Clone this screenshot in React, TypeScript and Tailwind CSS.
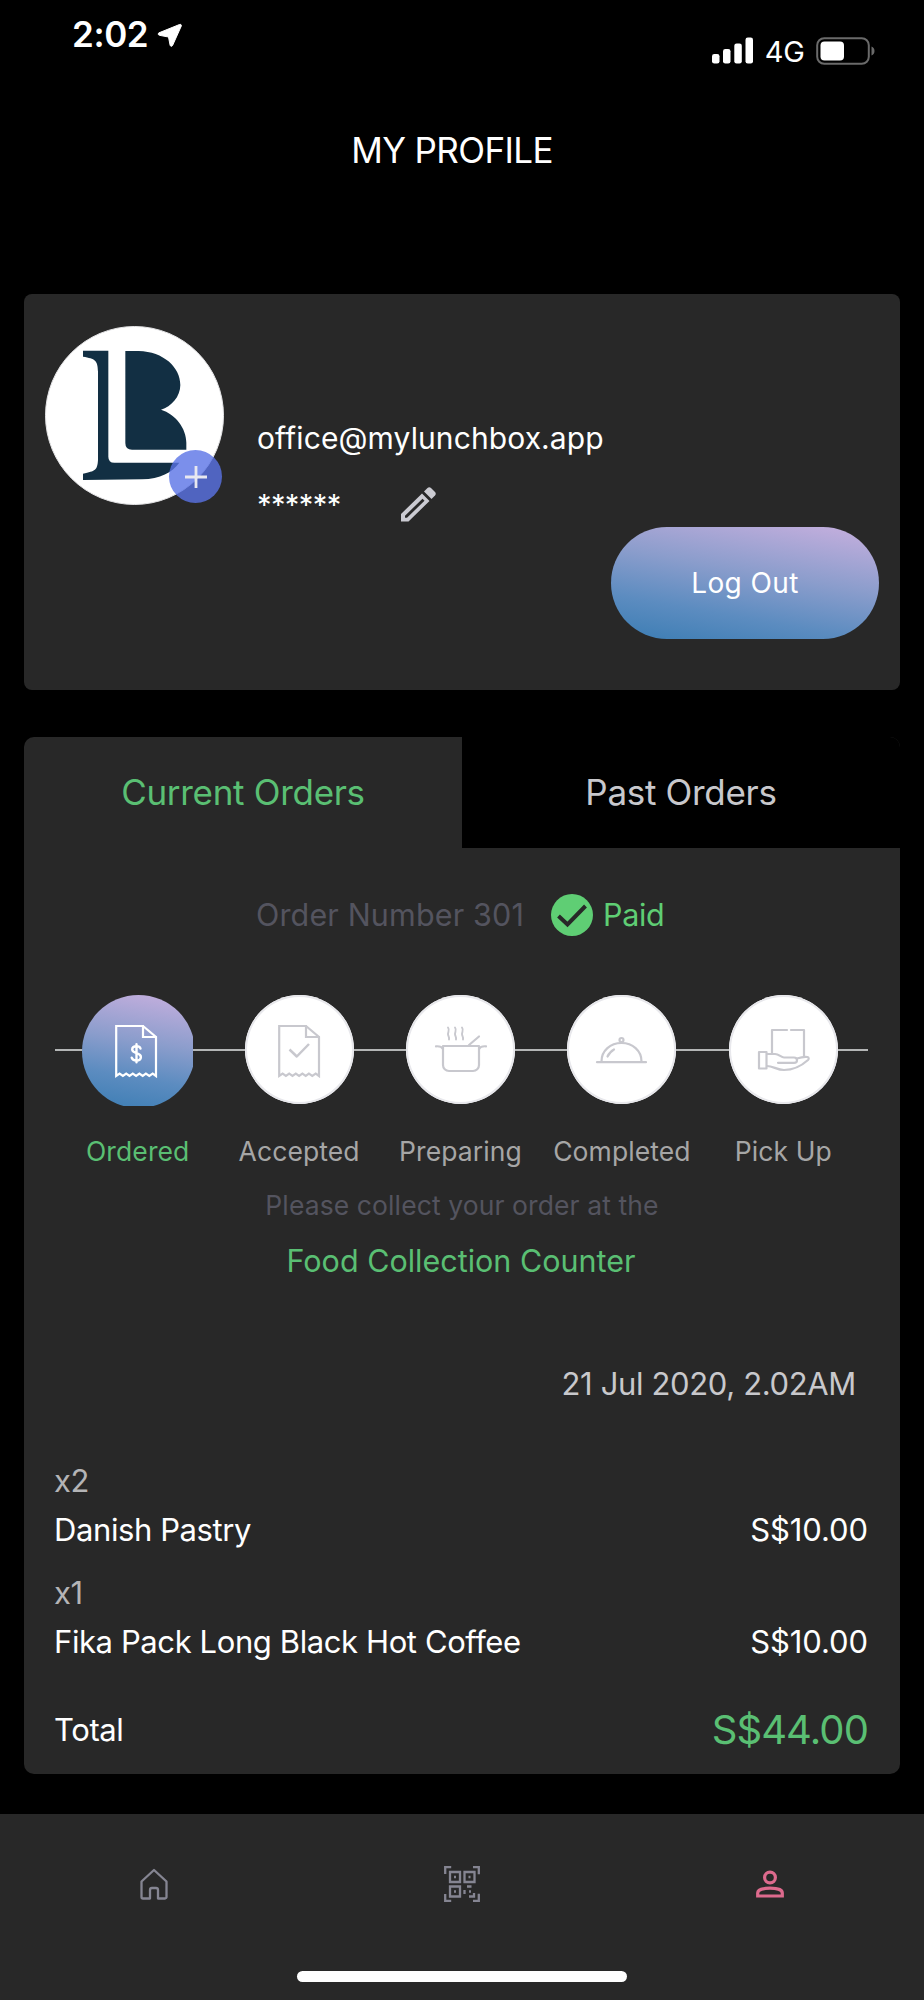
import React, { useState } from 'react';

const steps = [
  { key: 'ordered', label: 'Ordered' },
  { key: 'accepted', label: 'Accepted' },
  { key: 'preparing', label: 'Preparing' },
  { key: 'completed', label: 'Completed' },
  { key: 'pickup', label: 'Pick Up' },
];

const items = [
  { qty: 'x2', name: 'Danish Pastry', price: 'S$10.00' },
  { qty: 'x1', name: 'Fika Pack Long Black Hot Coffee', price: 'S$10.00' },
];

// every step icon is drawn on a 110 x 110 box, the size of its circle
const StepIcon: React.FC<{ name: string }> = ({ name }) => {
  const line = {
    fill: 'none',
    stroke: 'currentColor',
    strokeWidth: 2.2,
    strokeLinecap: 'round' as const,
    strokeLinejoin: 'round' as const,
  };
  return (
    <svg viewBox="0 0 110 110" className="w-[110px] h-[110px] shrink-0">
      {(name === 'ordered' || name === 'accepted') && (
        <g {...line} strokeLinejoin="miter">
          <path d="M34.2 81V31H61l13 11v39l-3.3-2.400-3.400 2.400-3.400-2.400-3.200 2.400-3.300-2.400-3.300 2.400-3.300-2.400-3.300 2.400-3.300-2.400-3.300 2.400-3.300-2.400z" />
          <path d="M61 31v11h13" />
        </g>
      )}
      {name === 'ordered' && (
        <path {...line} strokeWidth={2.4} d="M58.500 53.500c-.5-1.700-2-2.300-4.100-2.300-2.400 0-4.200 1.100-4.200 3.400 0 4.500 8.700 2.700 8.700 7.300 0 2.400-2 3.500-4.500 3.500s-4.200-.9-4.700-2.800M54.500 49.200v18" />
      )}
      {name === 'accepted' && <path {...line} strokeWidth={2.5} strokeLinecap="butt" d="M44.500 54.500l7.300 7 12.200-12.500" />}
      {name === 'preparing' && (
        <g {...line}>
          <path d="M37 51h36v19a6 6 0 0 1-6 6H43a6 6 0 0 1-6-6z" />
          <path d="M37 54c-1-2-3-3-7-2.700M73 54c1-2 3-3 7-2.700" />
          <path d="M63 50l10-8.500" />
          <path strokeWidth={1.9} d="M42 32.500c2 2.500 0 4.500 0 6.500s1.500 3 1 5.500M49 32.500c2 2.500 0 4.500 0 6.500s1.500 3 1 5.500M56 32.500c2 2.500 0 4.500 0 6.500s1.500 3 1 5.500" />
        </g>
      )}
      {name === 'completed' && (
        <g {...line}>
          <path d="M30 67.200h49" />
          <path d="M34.500 66.500c0-11 9-18.500 20-18.500s20 7.500 20 18.500" />
          <circle cx="54.500" cy="45" r="2" />
          <path d="M40.500 61.500c1.500-3.500 4-5.500 6.500-7" />
        </g>
      )}
      {name === 'pickup' && (
        <g {...line}>
          <path d="M58 35H43v23M62 35h13v27" />
          <path d="M30 57h7.500v16.500H30z" />
          <path d="M38 59h8c4 0 6 3.500 9 3.500h10c4 0 4 5.300 0 5.300H49" />
          <path d="M68 63.500c3-1 7-2 10.500-1.500 1.500.5 1.500 2 .5 3-5 4.500-13 10-24 10-7 0-11-4-17-4" />
        </g>
      )}
    </svg>
  );
};

const StatusBar: React.FC = () => (
  <div className="h-[92px] flex justify-between pl-[72px] pr-12">
    <div className="h-[69px] flex items-center">
      <span className="text-[35px] leading-none font-semibold tracking-[-0.4px]">2:02</span>
      <svg viewBox="0 0 25 24" className="w-[25px] h-6 ml-[9px]">
        <path d="M22.500 1.500L2 9.800c-1.200.6-1 2.200.4 2.500L11.500 14l1.600 8.200c.3 1.400 1.900 1.500 2.500.2L24.300 3c.4-1.100-.6-2-1.800-1.500z" fill="white" stroke="white" strokeLinejoin="round" />
      </svg>
    </div>
    <div className="h-[101px] flex items-center">
      <svg viewBox="0 0 43 27" className="w-[43px] h-[27px]" fill="white">
        <rect x="1" y="17" width="7.500" height="9.500" rx="2.300" />
        <rect x="12" y="12" width="7.500" height="14.500" rx="2.300" />
        <rect x="23.300" y="6.500" width="7.500" height="20" rx="2.300" />
        <rect x="34.500" y="0.500" width="7.500" height="26" rx="2.300" />
      </svg>
      <span className="text-[29px] leading-none ml-[11px] mt-[2px]">4G</span>
      <svg viewBox="0 0 60 28" className="w-[60px] h-7 ml-[11px]">
        <rect x="1.200" y="1.200" width="51.600" height="25.600" rx="7" fill="none" stroke="#6a6a6a" strokeWidth="2" />
        <rect x="4.500" y="4.500" width="23.500" height="19" rx="4" fill="white" />
        <path d="M55.500 9.500c4 1.500 4 7.500 0 9z" fill="#6a6a6a" />
      </svg>
    </div>
  </div>
);

const Avatar: React.FC = () => (
  <div className="relative w-[179px] h-[179px] shrink-0">
    <svg viewBox="74 138 537 537" className="w-full h-full">
      <circle cx="342.500" cy="406.500" r="267" fill="white" stroke="#e4e4e6" strokeWidth="3" />
      <g fill="#122f43">
        <path d="M188 212H264V530Q264 548 282 548H477C455 577 420 597 365 598L188 600V581C225 573 231 571 233 540V275C232 240 225 236 188 230Z" />
        <path d="M315 213H355C430 215 480 262 480 315C480 350 453 380 422 389C465 402 498 445 498 488V509H335Q315 509 315 489Z" />
      </g>
    </svg>
    <button className="absolute left-[124px] top-[124px] w-[53px] h-[53px] rounded-full bg-[#5a73e6]/80 flex items-center justify-center">
      <svg viewBox="0 0 22 22" className="w-[22px] h-[22px]" stroke="#e8e8f0" strokeWidth="2.800">
        <path d="M11 0v22M0 11h22" />
      </svg>
    </button>
  </div>
);

const App: React.FC = () => {
  const [tab, setTab] = useState('current');

  return (
    <div className="w-[924px] h-[2000px] bg-black text-white flex flex-col overflow-hidden font-['Inter','Liberation_Sans',sans-serif]">
      <StatusBar />
      <h1 className="h-[116px] pr-5 flex items-center justify-center text-[35px] tracking-[-0.6px]">MY PROFILE</h1>

      {/* profile card */}
      <div className="mt-[86px] mx-6 h-[396px] rounded-lg bg-[#282828] px-[21px] pt-8">
        <div className="flex">
          <Avatar />
          <div className="ml-[33px] pt-[92px]">
            <div className="h-10 leading-10 text-[30px] tracking-[0.1px]">office@mylunchbox.app</div>
            <div className="mt-[27px] h-10 flex items-center">
              <span className="w-[143px] text-[29px] leading-10 tracking-[-0.6px]">******</span>
              <svg viewBox="0 0 36 36" className="w-9 h-9">
                <path fillRule="evenodd" d="M1 27L22 6.500l7.500 7.500L8.500 34.500H1zM5 28.700v2h2L24.500 13.800 22.500 11.800z" fill="#cbcbd2" />
                <path d="M24 4.500L27.500 1c1-1 2.500-1 3.500 0l4 4c1 1 1 2.500 0 3.500L31.500 12z" fill="#cbcbd2" />
              </svg>
            </div>
          </div>
        </div>
        <div className="flex justify-end mt-[2px]">
          <button className="w-[268px] h-28 rounded-full bg-[linear-gradient(190deg,#bfaddc_6%,#8b9dcc_42%,#5c8cc0_72%,#4280b6_94%)] text-[28px] tracking-[0.4px]">Log Out</button>
        </div>
      </div>

      {/* orders card */}
      <div className="mt-[47px] mx-6 h-[1037px] rounded-[10px] bg-[#282828] overflow-hidden">
        <div className="h-[111px] flex text-[35px] tracking-[-0.3px]">
          <button onClick={() => setTab('current')} className={`flex-1 ${tab === 'current' ? 'text-[#5abf73]' : 'bg-black text-[#c8c8cc]'}`}>Current Orders</button>
          <button onClick={() => setTab('past')} className={`flex-1 ${tab === 'past' ? 'text-[#5abf73]' : 'bg-black text-[#c8c8cc]'}`}>Past Orders</button>
        </div>

        <div className="mt-[45px] h-11 pl-[232px] flex items-center text-[30.500px]">
          <span className="w-[295px] text-[#54545f] tracking-[0.150px]">Order Number 301</span>
          <svg viewBox="0 0 42 42" className="w-[42px] h-[42px]">
            <circle cx="21" cy="21" r="21" fill="#5fce74" />
            <path d="M7.500 22l9 8.500L34.500 12" fill="none" stroke="#282828" strokeWidth="4" />
          </svg>
          <span className="ml-[10px] text-[#5fce74] tracking-[-0.3px]">Paid</span>
        </div>

        {/* progress */}
        <div className="relative mt-[58px] ml-[33px] w-[807px] flex">
          <div className="absolute -left-[2px] top-[54px] w-[813px] h-[2px] bg-[#b4b6b6]" />
          {steps.map((s, i) => (
            <div key={s.key} className="relative flex-1 flex flex-col items-center">
              {i === 0 ? (
                <div className="w-[111px] h-[111px] overflow-hidden">
                  <div className="w-[113px] h-[113px] rounded-full bg-[linear-gradient(190deg,#bfaddc_6%,#8b9dcc_42%,#5c8cc0_70%,#4280b6_94%)] text-white">
                    <StepIcon name={s.key} />
                  </div>
                </div>
              ) : (
                <div className="w-[109px] h-[109px] mb-[2px] rounded-full bg-white shadow-[inset_0_0_0_2px_#e8e8ec] text-[#c8c8ce]">
                  <StepIcon name={s.key} />
                </div>
              )}
              <span className={`mt-[25px] h-10 leading-10 text-[26.500px] tracking-[0.1px] whitespace-nowrap ${i === 0 ? 'text-[#5abf73]' : 'text-[#a6a6a6]'}`}>{s.label}</span>
            </div>
          ))}
        </div>

        <div className="mt-[14px] h-10 leading-10 text-center text-[26.500px] tracking-[0.1px] text-[#54545f]">Please collect your order at the</div>
        <div className="mt-4 h-10 leading-10 pr-[2px] text-center text-[30.500px] text-[#5abf73]">Food Collection Counter</div>
        <div className="mt-[83px] h-10 leading-10 pr-11 text-right text-[31px] tracking-[-0.350px] text-[#c8c8cc]">21 Jul 2020, 2.02AM</div>

        <div className="mt-[57px] pl-[30px] pr-8 text-[31px] leading-10">
          {items.map(item => (
            <div key={item.name} className="mb-[21px] h-[91px]">
              <div className="text-[#b4b4b6] tracking-[-0.4px]">{item.qty}</div>
              <div className="mt-[9px] flex justify-between">
                <span className="tracking-[-0.4px]">{item.name}</span>
                <span className="tracking-[-0.1px]">{item.price}</span>
              </div>
            </div>
          ))}
          <div className="mt-[42px] h-12 flex items-center justify-between">
            <span className="tracking-[-0.4px]">Total</span>
            <span className="text-[40px] tracking-[-0.9px] text-[#5abf73]">S$44.00</span>
          </div>
        </div>
      </div>

      {/* bottom navigation */}
      <div className="mt-auto h-[186px] bg-[#282828] flex flex-col justify-between items-center pb-[18px]">
        <div className="w-full h-[140px] flex text-[#858592]">
          <div className="flex-1 flex items-center justify-center">
            <svg viewBox="0 0 28 32" className="w-7 h-8" fill="none" stroke="currentColor" strokeWidth="2.300" strokeLinejoin="round">
              <path d="M14 2L1.500 13.500V29a1.500 1.500 0 0 0 1.500 1.500h7V22a2 2 0 0 1 2-2h4a2 2 0 0 1 2 2v8.500h7a1.500 1.500 0 0 0 1.500-1.500V13.500z" />
            </svg>
          </div>
          <div className="flex-1 flex items-center justify-center">
            <svg viewBox="0 0 36 36" className="w-9 h-9" fill="none" stroke="currentColor" strokeWidth="2.300">
              <path d="M1.200 8V1.200h6M29 1.200h5.800v7M1.200 28v6.800h6M29 34.800h5.800v-7" />
              <path d="M6 6h10v10H6zM20.500 6h10v10h-10zM6 20.500h10v10H6z" />
              <path d="M10 11h2M24.500 11h2M10 25.500h2M23 20.500h4.500M20.500 24v4M25 25.500h2M25 30.500h5V27" />
            </svg>
          </div>
          <div className="flex-1 flex items-center justify-center text-[#dd6a8d]">
            <svg viewBox="0 0 28 28" className="w-7 h-7" fill="none" stroke="currentColor" strokeWidth="3.200">
              <circle cx="14" cy="7.500" r="5.400" />
              <path d="M1.700 26v-3c0-3.500 6.500-4.800 12.300-4.800s12.300 1.300 12.300 4.800v3z" />
            </svg>
          </div>
        </div>
        <div className="w-[330px] h-[11px] rounded-full bg-white" />
      </div>
    </div>
  );
};

export default App;
